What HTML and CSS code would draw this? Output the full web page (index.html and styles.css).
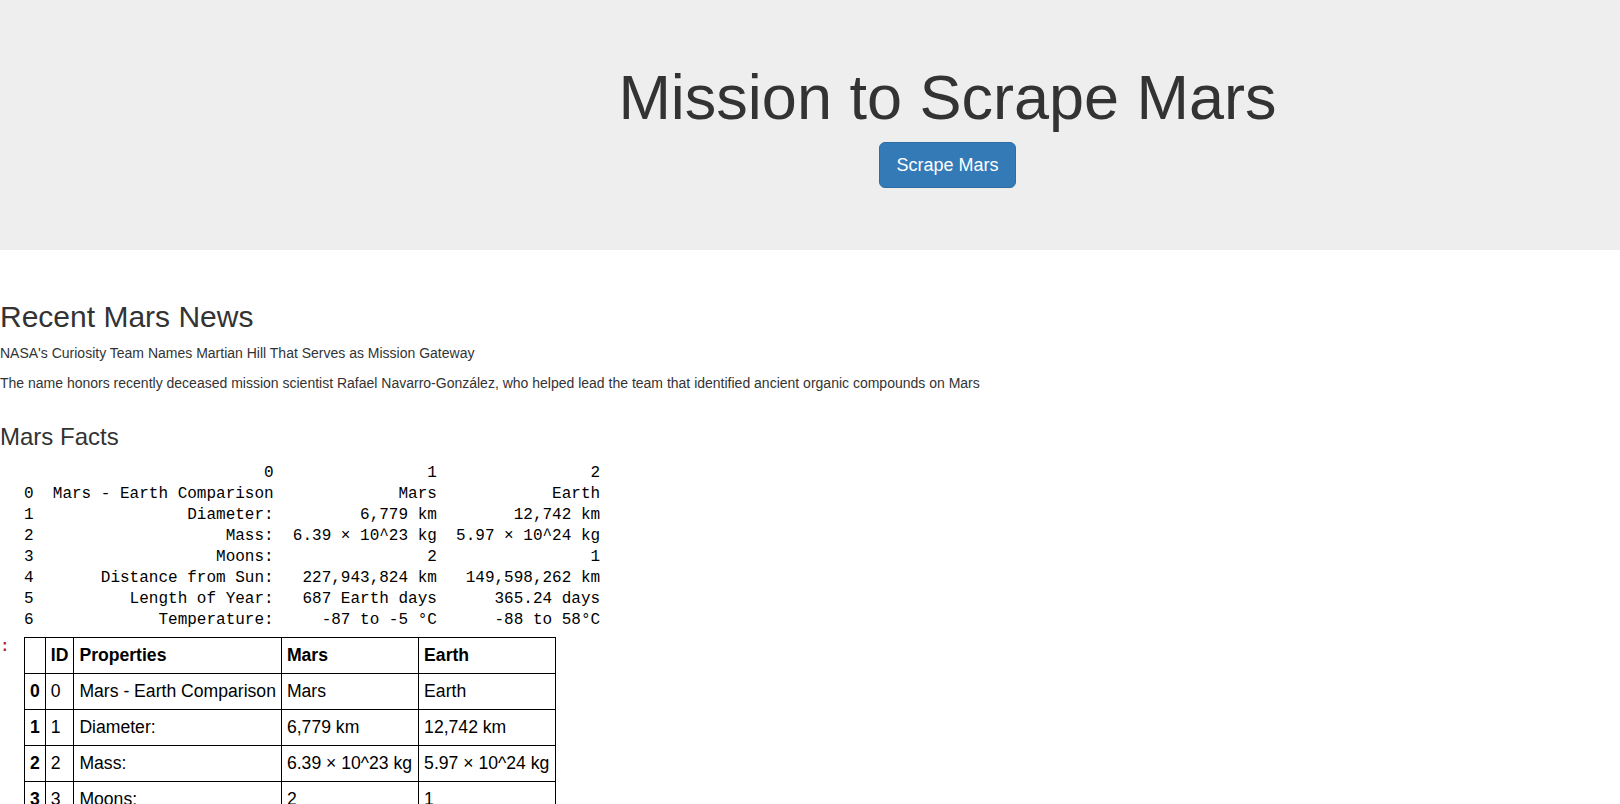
FILE: index.html
```html
<!DOCTYPE html>
<html lang="en">
<head>
<meta charset="utf-8">
<title>Mission to Scrape Mars</title>
<link rel="stylesheet" href="styles.css">
</head>
<body>
<div class="jumbotron">
  <div class="jumbo-inner">
    <h1 class="title">Mission to Scrape Mars</h1>
    <p class="action"><a class="btn btn-primary btn-lg" href="#">Scrape Mars</a></p>
  </div>
</div>

<div class="content">
  <h2 class="section-title">Recent Mars News</h2>
  <p class="news">NASA's Curiosity Team Names Martian Hill That Serves as Mission Gateway</p>
  <p class="news">The name honors recently deceased mission scientist Rafael Navarro-González, who helped lead the team that identified ancient organic compounds on Mars</p>

  <h3 class="facts-title">Mars Facts</h3>
  <div class="output">
    <div class="prompt"></div>
<pre class="df-text">                         0                1                2
0  Mars - Earth Comparison             Mars            Earth
1                Diameter:         6,779 km        12,742 km
2                    Mass:  6.39 × 10^23 kg  5.97 × 10^24 kg
3                   Moons:                2                1
4       Distance from Sun:   227,943,824 km   149,598,262 km
5          Length of Year:   687 Earth days      365.24 days
6             Temperature:     -87 to -5 °C      -88 to 58°C</pre>
    <div class="prompt prompt-out">:</div>
    <table class="df-table">
      <thead>
        <tr><th></th><th>ID</th><th>Properties</th><th>Mars</th><th>Earth</th></tr>
      </thead>
      <tbody>
        <tr><th>0</th><td>0</td><td>Mars - Earth Comparison</td><td>Mars</td><td>Earth</td></tr>
        <tr><th>1</th><td>1</td><td>Diameter:</td><td>6,779 km</td><td>12,742 km</td></tr>
        <tr><th>2</th><td>2</td><td>Mass:</td><td>6.39 × 10^23 kg</td><td>5.97 × 10^24 kg</td></tr>
        <tr><th>3</th><td>3</td><td>Moons:</td><td>2</td><td>1</td></tr>
        <tr><th>4</th><td>4</td><td>Distance from Sun:</td><td>227,943,824 km</td><td>149,598,262 km</td></tr>
        <tr><th>5</th><td>5</td><td>Length of Year:</td><td>687 Earth days</td><td>365.24 days</td></tr>
        <tr><th>6</th><td>6</td><td>Temperature:</td><td>-87 to -5 °C</td><td>-88 to 58°C</td></tr>
      </tbody>
    </table>
  </div>
</div>
</body>
</html>
```
FILE: styles.css
```css
html, body {
  margin: 0;
  padding: 0;
}

body {
  font-family: "Liberation Sans", Arial, sans-serif;
  font-size: 14px;
  line-height: 20px;
  color: #333;
  background: #fff;
}

.jumbotron {
  background: #eee;
  padding: 43px 0 47px;
  margin-bottom: 30px;
}

.jumbo-inner {
  padding-left: 275px;
  text-align: center;
}

.title {
  font-size: 63px;
  line-height: 1.1;
  font-weight: 500;
  margin: 20px 0 10px;
  color: #333;
}

.action {
  font-size: 21px;
  line-height: 30px;
  margin: 0 0 15px;
}

.btn {
  display: inline-block;
  text-decoration: none;
  border: 1px solid transparent;
  font-family: "Liberation Sans", Arial, sans-serif;
}

.btn-primary {
  color: #fff;
  background: #337ab7;
  border-color: #2e6da4;
}

.btn-lg {
  padding: 10px 16px;
  font-size: 18px;
  line-height: 24px;
  border-radius: 6px;
}

.content {
  display: flow-root;
  margin: 0;
}

.section-title {
  font-size: 30px;
  line-height: 1.1;
  font-weight: 500;
  margin: 20px 0 10px;
}

.news {
  margin: 0 0 10px;
}

.facts-title {
  font-size: 24px;
  line-height: 1.1;
  font-weight: 500;
  margin: 31px 0 12px;
}

.output {
  display: grid;
  grid-template-columns: 24px auto;
  justify-content: start;
  justify-items: start;
  align-items: start;
}

.prompt {
  font-family: "Liberation Mono", monospace;
  font-size: 16px;
  line-height: 21px;
}

.prompt-out {
  color: #b3261e;
  margin-top: 6px;
  font-weight: bold;
}

.df-text {
  margin: 0;
  font-family: "Liberation Mono", monospace;
  font-size: 16px;
  line-height: 21px;
  color: #000;
}

.df-table {
  margin-top: 6px;
  border-collapse: collapse;
  font-family: "Liberation Sans", Arial, sans-serif;
  font-size: 17.6px;
  line-height: 25px;
  color: #000;
}

.df-table th,
.df-table td {
  border: 1px solid #000;
  padding: 5px;
  text-align: left;
  vertical-align: top;
}

.df-table th {
  font-weight: bold;
}
```
